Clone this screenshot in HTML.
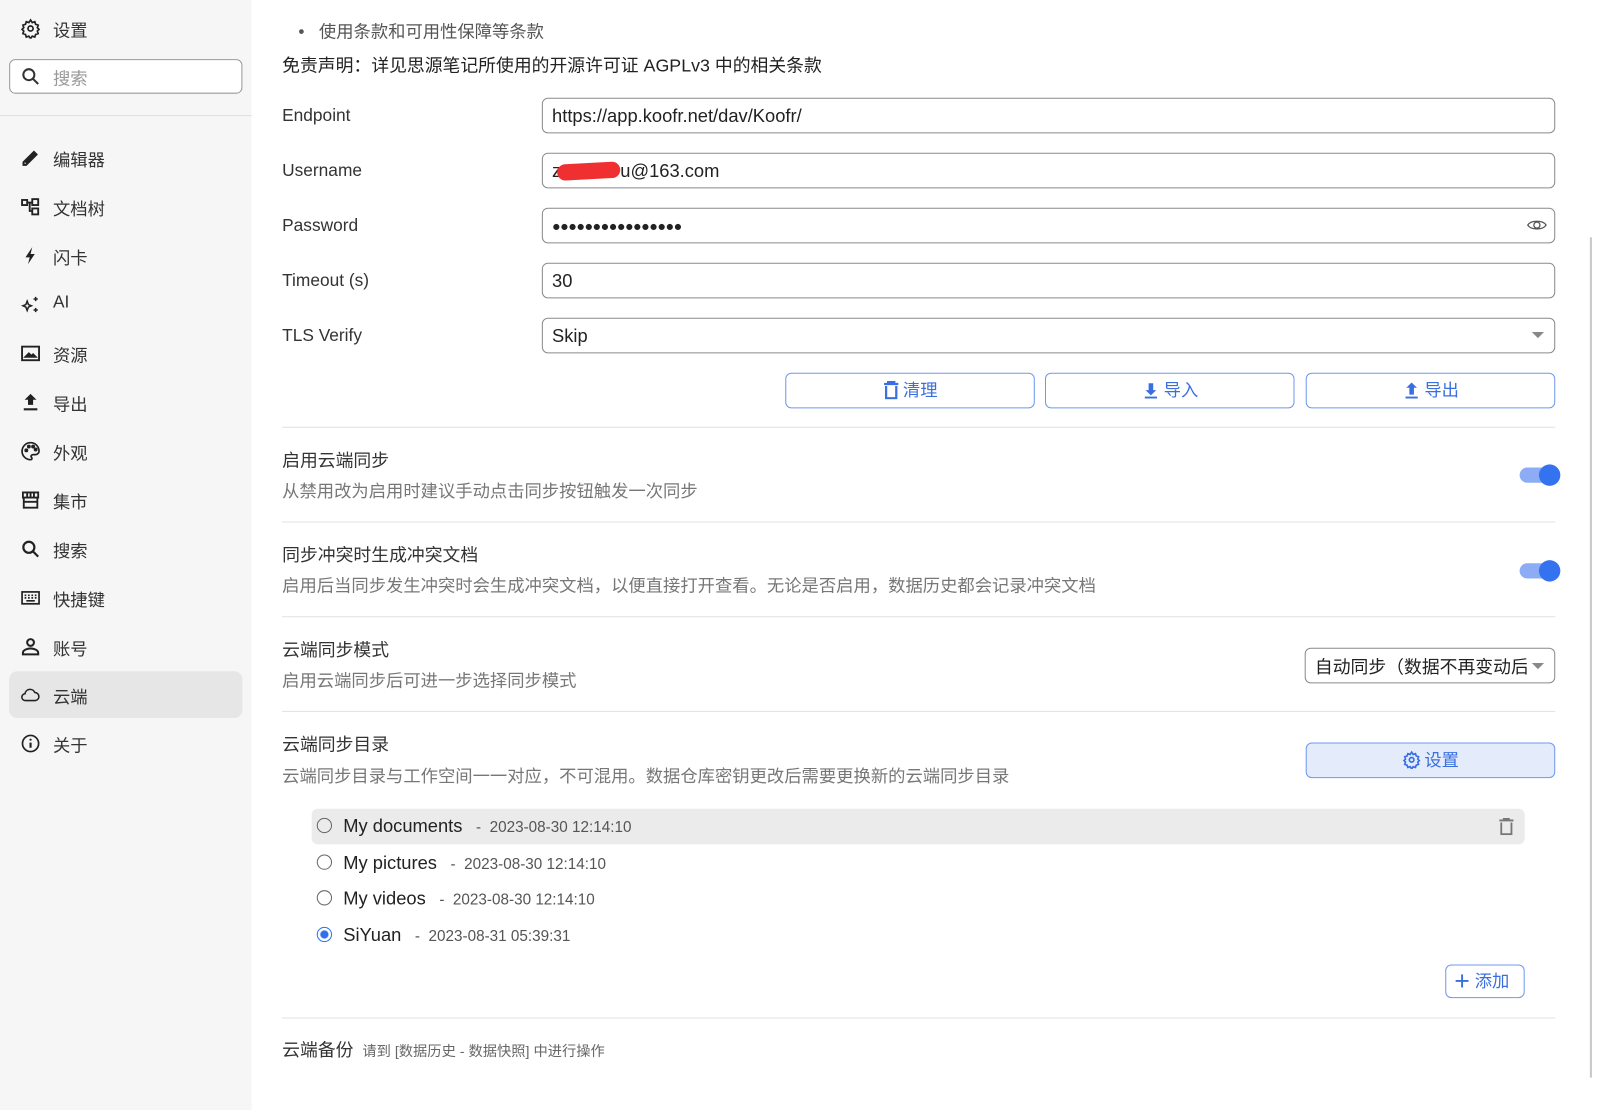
<!DOCTYPE html>
<html><head><meta charset="utf-8">
<style>
*{margin:0;padding:0;box-sizing:border-box}
body{width:1597px;height:1104px;overflow:hidden;background:#fff;font-family:"Liberation Sans","Noto Sans CJK SC",sans-serif;color:#222;position:relative}
#w{position:absolute;left:0;top:0;width:1568px;height:1084px;transform:scale(1.0185);transform-origin:0 0}
.a{position:absolute;white-space:nowrap}
#side{position:absolute;left:0;top:0;width:247px;height:1090px;background:#f6f6f6}
.nav{position:absolute;left:9px;width:229px;height:46px;border-radius:8px;font-size:17px;color:#333}
.nav svg{position:absolute;left:11px;top:13px;width:20px;height:20px}
.nav span{position:absolute;left:43px;top:11px}
.lbl{font-size:17px;color:#333}
.inp{position:absolute;left:532px;width:995px;height:35px;border:1px solid #8a8a8a;border-radius:6px;font-size:18px;padding:7px 9px;color:#222}
.btn{position:absolute;top:366px;width:245px;height:35px;border:1px solid #6f98ee;border-radius:6px;color:#3a6fe0;font-size:17px;text-align:center;line-height:33px}
.btn svg{vertical-align:-3px;margin-right:4px}
.hr{position:absolute;left:277px;width:1250px;height:1px;background:#e2e2e2}
.t{font-size:17.5px;color:#333}
.d{font-size:17px;color:#777}
.tg{position:absolute;left:1492px;width:38px;height:15px;border-radius:8px;background:#8cadf5}
.tg::after{content:"";position:absolute;right:-2px;top:-3px;width:21px;height:21px;border-radius:50%;background:#3472ef}
.rad{position:absolute;left:311px;width:15px;height:15px;border:1.5px solid #666;border-radius:50%}
.it{font-size:18px;color:#222}
.dt{font-size:15px;color:#555}
</style></head><body><div id="w">
<div id="side">
 <div class="nav" style="top:5px"><svg viewBox="0 0 24 24" fill="none" stroke="#222" stroke-width="2"><circle cx="12" cy="12" r="3"/><path d="M12 2l2 3 3-1 1 3 3 1-1 3 2 2-2 2 1 3-3 1-1 3-3-1-2 3-2-3-3 1-1-3-3-1 1-3-2-2 2-2-1-3 3-1 1-3 3 1z"/></svg><span>设置</span></div>
 <div class="a" style="left:9px;top:58px;width:229px;height:34px;border:1px solid #9a9a9a;border-radius:6px;background:#fff"></div>
 <svg class="a" style="left:20px;top:65px" width="20" height="20" viewBox="0 0 24 24" fill="none" stroke="#333" stroke-width="2.4"><circle cx="10" cy="10" r="6.5"/><path d="M15 15l6 6"/></svg>
 <div class="a" style="left:52px;top:63px;font-size:17px;color:#999">搜索</div>
 <div class="a" style="left:0;top:113px;width:247px;height:1px;background:#dedede"></div>
 <div class="nav" style="top:132px"><svg viewBox="0 0 24 24" fill="#222"><path d="M3 21v-4L16 4l4 4L7 21zM15 6l3 3" stroke="#222" stroke-width="1"/><path d="M5 17l-0 2 2 0z" fill="#fff"/></svg><span>编辑器</span></div>
 <div class="nav" style="top:180px"><svg viewBox="0 0 24 24" fill="none" stroke="#222" stroke-width="2.2"><rect x="2" y="4" width="6" height="6"/><rect x="14" y="3" width="7" height="7"/><rect x="14" y="14" width="7" height="7"/><path d="M8 7h6M11 7v10h3"/></svg><span>文档树</span></div>
 <div class="nav" style="top:228px"><svg viewBox="0 0 24 24" fill="#222"><path d="M14 2L6 14h5l-2 8 8-12h-5z"/></svg><span>闪卡</span></div>
 <div class="nav" style="top:276px"><svg viewBox="0 0 24 24" fill="none" stroke="#222" stroke-width="1.8"><path d="M8 8l1.5 4L13 13.5 9.5 15 8 19 6.5 15 3 13.5 6.5 12z"/><path d="M18 3v5M15.5 5.5h5M18 16v5M15.5 18.5h5"/></svg><span>AI</span></div>
 <div class="nav" style="top:324px"><svg viewBox="0 0 24 24" fill="none" stroke="#222" stroke-width="2.2"><rect x="2" y="4" width="20" height="16"/><path d="M6 16l4-4 3 3 2-2 3 3z" fill="#222"/></svg><span>资源</span></div>
 <div class="nav" style="top:372px"><svg viewBox="0 0 24 24" fill="#222"><path d="M12 2l7 7h-4v6H9V9H5z"/><rect x="4" y="19" width="16" height="2.5"/></svg><span>导出</span></div>
 <div class="nav" style="top:420px"><svg viewBox="0 0 24 24" fill="none" stroke="#222" stroke-width="2"><path d="M12 2a10 10 0 100 20c2 0 2-2 1-3s0-3 2-3h3c2 0 4-2 4-4A10 10 0 0012 2z"/><circle cx="7" cy="11" r="1.3" fill="#222"/><circle cx="10" cy="6.5" r="1.3" fill="#222"/><circle cx="15" cy="6.5" r="1.3" fill="#222"/><circle cx="18" cy="10" r="1.3" fill="#222"/></svg><span>外观</span></div>
 <div class="nav" style="top:468px"><svg viewBox="0 0 24 24" fill="none" stroke="#222" stroke-width="2.2"><path d="M3 3h18v6H3zM4 9v12h16V9M8 3v6M12 3v6M16 3v6M4 14h16"/></svg><span>集市</span></div>
 <div class="nav" style="top:516px"><svg viewBox="0 0 24 24" fill="none" stroke="#222" stroke-width="2.6"><circle cx="10" cy="10" r="6.5"/><path d="M15 15l6 6"/></svg><span>搜索</span></div>
 <div class="nav" style="top:564px"><svg viewBox="0 0 24 24" fill="none" stroke="#222" stroke-width="2"><rect x="2" y="5" width="20" height="14"/><path d="M5 9h2M9 9h2M13 9h2M17 9h2M5 12h2M9 12h2M13 12h2M17 12h2M7 15.5h10"/></svg><span>快捷键</span></div>
 <div class="nav" style="top:612px"><svg viewBox="0 0 24 24" fill="none" stroke="#222" stroke-width="2.4"><circle cx="12" cy="7" r="4"/><path d="M3 21v-2c0-3 5-5 9-5s9 2 9 5v2z"/></svg><span>账号</span></div>
 <div class="nav" style="top:659px;background:#e6e6e6"><svg viewBox="0 0 24 24" fill="none" stroke="#222" stroke-width="1.8"><path d="M6 19a4 4 0 01-.5-8 6 6 0 0111.5-1.5A4.8 4.8 0 0118 19z"/></svg><span>云端</span></div>
 <div class="nav" style="top:707px"><svg viewBox="0 0 24 24" fill="none" stroke="#222" stroke-width="2"><circle cx="12" cy="12" r="9.5"/><path d="M12 11v6" stroke-width="2.5"/><circle cx="12" cy="7.5" r="1.3" fill="#222" stroke="none"/></svg><span>关于</span></div>
</div>

<div class="a" style="left:293px;top:17px;font-size:17px;color:#555">•&nbsp;&nbsp;&nbsp;使用条款和可用性保障等条款</div>
<div class="a" style="left:277px;top:51px;font-size:17.5px;color:#222">免责声明：详见思源笔记所使用的开源许可证 AGPLv3 中的相关条款</div>

<div class="a lbl" style="left:277px;top:104px">Endpoint</div>
<div class="inp" style="top:96px">https://app.koofr.net/dav/Koofr/</div>
<div class="a lbl" style="left:277px;top:158px">Username</div>
<div class="inp" style="top:150px">z<span style="display:inline-block;width:62px;height:16px;background:#f03030;border-radius:8px;vertical-align:-2px;margin-left:-4px;transform:rotate(-3deg)"></span>u@163.com</div>
<div class="a lbl" style="left:277px;top:212px">Password</div>
<div class="inp" style="top:204px;font-size:14px;letter-spacing:-0.5px;padding-top:9px">●●●●●●●●●●●●●●●●</div>
<svg class="a" style="left:1499px;top:213px" width="20" height="16" viewBox="0 0 20 16" fill="none" stroke="#555" stroke-width="1.3"><path d="M1 8c3-5 15-5 18 0-3 5-15 5-18 0z"/><circle cx="10" cy="8" r="3"/></svg>
<div class="a lbl" style="left:277px;top:266px">Timeout (s)</div>
<div class="inp" style="top:258px">30</div>
<div class="a lbl" style="left:277px;top:320px">TLS Verify</div>
<div class="inp" style="top:312px">Skip</div>
<div class="a" style="left:1504px;top:326px;width:0;height:0;border-left:6px solid transparent;border-right:6px solid transparent;border-top:6px solid #888"></div>

<div class="btn" style="left:771px"><svg width="16" height="18" viewBox="0 0 16 18" fill="none" stroke="#3a6fe0" stroke-width="2.2"><path d="M1 3h14M5 3V1h6v2M3 5v12h10V5"/></svg>清理</div>
<div class="btn" style="left:1026px"><svg width="18" height="18" viewBox="0 0 24 24" fill="#3a6fe0"><path d="M12 19l7-7h-4V3H9v9H5z"/><rect x="4" y="20.5" width="16" height="2.5"/></svg>导入</div>
<div class="btn" style="left:1282px"><svg width="18" height="18" viewBox="0 0 24 24" fill="#3a6fe0"><path d="M12 2l7 7h-4v9H9V9H5z"/><rect x="4" y="20.5" width="16" height="2.5"/></svg>导出</div>

<div class="hr" style="top:419px"></div>
<div class="a t" style="left:277px;top:439px">启用云端同步</div>
<div class="a d" style="left:277px;top:468px">从禁用改为启用时建议手动点击同步按钮触发一次同步</div>
<div class="tg" style="top:459px"></div>
<div class="hr" style="top:512px"></div>
<div class="a t" style="left:277px;top:532px">同步冲突时生成冲突文档</div>
<div class="a d" style="left:277px;top:561px">启用后当同步发生冲突时会生成冲突文档，以便直接打开查看。无论是否启用，数据历史都会记录冲突文档</div>
<div class="tg" style="top:553px"></div>
<div class="hr" style="top:605px"></div>
<div class="a t" style="left:277px;top:625px">云端同步模式</div>
<div class="a d" style="left:277px;top:654px">启用云端同步后可进一步选择同步模式</div>
<div class="a" style="left:1281px;top:636px;width:246px;height:35px;border:1px solid #8a8a8a;border-radius:6px;font-size:17.5px;padding:5px 9px;overflow:hidden;color:#222">自动同步（数据不再变动后</div>
<div class="a" style="left:1499px;top:650px;width:26px;height:16px;background:#fff"></div>
<div class="a" style="left:1504px;top:651px;width:0;height:0;border-left:6px solid transparent;border-right:6px solid transparent;border-top:6px solid #888"></div>
<div class="hr" style="top:698px"></div>
<div class="a t" style="left:277px;top:718px">云端同步目录</div>
<div class="a d" style="left:277px;top:748px">云端同步目录与工作空间一一对应，不可混用。数据仓库密钥更改后需要更换新的云端同步目录</div>
<div class="a" style="left:1282px;top:729px;width:245px;height:35px;border:1px solid #6f98ee;border-radius:6px;background:#e4ecfc;color:#3a6fe0;font-size:17px;text-align:center;line-height:33px"><svg width="18" height="18" viewBox="0 0 24 24" fill="none" stroke="#3a6fe0" stroke-width="2.2" style="vertical-align:-3px;margin-right:4px"><circle cx="12" cy="12" r="3"/><path d="M12 2l2 3 3-1 1 3 3 1-1 3 2 2-2 2 1 3-3 1-1 3-3-1-2 3-2-3-3 1-1-3-3-1 1-3-2-2 2-2-1-3 3-1 1-3 3 1z"/></svg>设置</div>

<div class="a" style="left:306px;top:794px;width:1191px;height:35px;background:#ebebeb;border-radius:6px"></div>
<svg class="a" style="left:1472px;top:803px" width="14" height="17" viewBox="0 0 14 17" fill="none" stroke="#777" stroke-width="1.8"><path d="M0 2.5h14M4.5 2.5V1h5v1.5M2 4.5v11.5h10V4.5"/></svg>
<div class="rad" style="top:803px"></div><div class="a it" style="left:337px;top:801px">My documents <span class="dt">&nbsp;&nbsp;-&nbsp;&nbsp;2023-08-30 12:14:10</span></div>
<div class="rad" style="top:839px"></div><div class="a it" style="left:337px;top:837px">My pictures <span class="dt">&nbsp;&nbsp;-&nbsp;&nbsp;2023-08-30 12:14:10</span></div>
<div class="rad" style="top:874px"></div><div class="a it" style="left:337px;top:872px">My videos <span class="dt">&nbsp;&nbsp;-&nbsp;&nbsp;2023-08-30 12:14:10</span></div>
<div class="rad" style="top:910px;border-color:#2f6ff0;background:radial-gradient(circle,#2f6ff0 3.5px,#fff 4.5px)"></div><div class="a it" style="left:337px;top:908px">SiYuan <span class="dt">&nbsp;&nbsp;-&nbsp;&nbsp;2023-08-31 05:39:31</span></div>

<div class="a" style="left:1419px;top:947px;width:78px;height:33px;border:1px solid #6f98ee;border-radius:6px;color:#3a6fe0;font-size:17px;line-height:31px;padding-left:8px"><span style="font-size:26px;vertical-align:-3px;line-height:20px">+</span> 添加</div>
<div class="hr" style="top:999px"></div>
<div class="a" style="left:277px;top:1018px;font-size:17.5px;color:#333">云端备份 <span style="font-size:14px;color:#666">&nbsp;请到 [数据历史 - 数据快照] 中进行操作</span></div>

<div class="a" style="left:1561px;top:233px;width:2px;height:825px;background:#c8c8c8"></div>
</div></body></html>
